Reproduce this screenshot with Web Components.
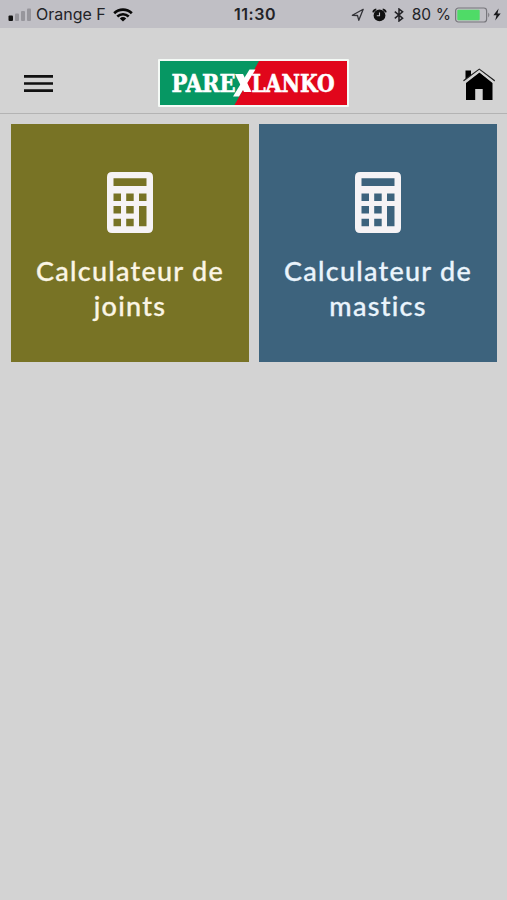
<!DOCTYPE html>
<html lang="fr">
<head>
<meta charset="UTF-8">
<meta name="viewport" content="width=device-width, initial-scale=1.0">
<title>Calculateurs</title>
<style>
    html, body {
        margin: 0;
        height: 100%;
        background: #d3d3d3;
    }

    body {
        overflow: hidden;
        font-family: Inter, "Liberation Sans", sans-serif;
    }

    main {
        display: grid;
        grid-template-columns: 1fr 1fr;
        gap: 10px;
        padding: 10px 10px 0 11px;
    }
</style>
</head>
<body>
    <status-bar carrier="Orange F" time="11:30" battery="80 %"></status-bar>
    <app-header><brand-logo></brand-logo></app-header>
    <main>
        <calc-tile style="--tile: #787325; --ink: #fbf5e4">Calculateur de joints</calc-tile>
        <calc-tile style="--tile: #3d637d; --ink: #eaf4fc">Calculateur de mastics</calc-tile>
    </main>

<script>
class StatusBar extends HTMLElement {
    constructor() {
        super();
        this.attachShadow({ mode: "open" });

        this.shadowRoot.innerHTML = `
            <style>
                :host {
                    display: grid;
                    grid-template-columns: 1fr auto 1fr;
                    align-items: center;
                    height: 28px;
                    padding: 1px 6px 0 8px;
                    box-sizing: border-box;
                    background: #c0bfc5;
                    color: #232327;
                    font-size: 16px;
                    line-height: 27px;
                    white-space: nowrap;
                }

                div {
                    display: flex;
                    align-items: center;
                }

                svg {
                    display: block;
                    flex: none;
                }

                .right {
                    justify-content: flex-end;
                }

                #carrier {
                    margin: 0 7px 0 4px;
                }

                #time {
                    margin-left: 1px;
                    font-weight: 600;
                    letter-spacing: 0.5px;
                }

                #battery {
                    margin: 0 4px 0 8px;
                    font-size: 15.5px;
                    letter-spacing: 0.1px;
                }
            </style>
            <div class="left">
                <svg width="24" height="14" viewBox="0 0 24 14">
                    <rect x="0.5" y="7.5" width="4.5" height="5.5" rx="1" fill="#111"/>
                    <g fill="#97969c">
                        <rect x="7" y="5.5" width="4" height="7.5" rx="1"/>
                        <rect x="13" y="3" width="4" height="10" rx="1"/>
                        <rect x="19" y="0.5" width="4" height="12.5" rx="1"/>
                    </g>
                </svg>
                <span id="carrier"></span>
                <svg width="20" height="14" viewBox="0 0 20 14" fill="none" stroke="#080808" stroke-width="2.7">
                    <path d="M1.2 5.2C6.2 .4 13.8 .4 18.8 5.2"/>
                    <path d="M4.3 8.5C7.6 5.5 12.4 5.5 15.7 8.5"/>
                    <path d="M10 13.5 6.8 10.4Q10 7.8 13.2 10.4Z" fill="#080808" stroke="none"/>
                </svg>
            </div>
            <span id="time"></span>
            <div class="right">
                <svg width="14" height="14" viewBox="0 0 14 14" fill="none" stroke="#333338" stroke-width="1.3" stroke-linejoin="round">
                    <path d="M12.2 1.3 1.3 7.3 6.5 7.5 7.8 12.3Z"/>
                </svg>
                <svg style="margin-left:7px" width="15" height="14" viewBox="0 0 15 14">
                    <circle cx="7.5" cy="7.4" r="5.9" fill="#111"/>
                    <path d="M1.2 4.3Q1.5 1.6 4.3 1.3M10.7 1.3Q13.5 1.6 13.8 4.3" fill="none" stroke="#111" stroke-width="1.8"/>
                    <path d="M7.5 4.4V7.8H4.8" fill="none" stroke="#c0bfc5" stroke-width="1.1"/>
                </svg>
                <svg style="margin-left:7px" width="10" height="14" viewBox="0 0 10 14" fill="none" stroke="#222226" stroke-width="1.5">
                    <path d="M.8 3.6 8.6 10.2 5 13V1L8.6 3.8 .8 10.4"/>
                </svg>
                <span id="battery"></span>
                <svg width="37" height="16" viewBox="0 0 37 16">
                    <rect x="0.6" y="1" width="31" height="14" rx="2.8" fill="none" stroke="#77777c" stroke-width="1.2"/>
                    <rect x="2.3" y="2.8" width="22.4" height="10.4" rx="1" fill="#4fdb67"/>
                    <path d="M33.2 5.6Q35.6 8 33.2 10.4Z" fill="#77777c"/>
                </svg>
                <svg style="margin-left:1px" width="8" height="13" viewBox="0 0 8 13">
                    <path d="M5.6 .4 .4 7.3H3.5L2.2 12.6 7.7 5.4H4.5Z" fill="#19191c"/>
                </svg>
            </div>
        `;
    }

    connectedCallback() {
        for (const name of ["carrier", "time", "battery"]) {
            this.shadowRoot.querySelector("#" + name).textContent = this.getAttribute(name);
        }
    }
}
customElements.define("status-bar", StatusBar);

class BrandLogo extends HTMLElement {
    constructor() {
        super();
        this.attachShadow({ mode: "open" });

        this.shadowRoot.innerHTML = `
            <style>
                :host {
                    display: block;
                }

                svg {
                    display: block;
                    overflow: visible;
                }

                text {
                    font-family: "DejaVu Serif Condensed", "DejaVu Serif", serif;
                    font-stretch: condensed;
                    font-weight: 700;
                    font-size: 24.5px;
                    fill: #fff;
                    stroke: #fff;
                    stroke-width: 0.6px;
                }
            </style>
            <svg width="191" height="48" viewBox="0 0 191 48">
                <rect width="191" height="48" rx="1" fill="#f4faf6"/>
                <rect x="2" y="2" width="187" height="44" fill="#e1061b"/>
                <path d="M2 2H101L76.5 46H2Z" fill="#069763"/>
                <text x="13.5" y="33" textLength="64" lengthAdjust="spacingAndGlyphs">PARE</text>
                <text x="93.5" y="33" textLength="83" lengthAdjust="spacingAndGlyphs">LANKO</text>
                <path d="M77 15H85L93.5 33H86Z" fill="#fff"/>
                <path d="M91.5 10.5H97.5L81 37.5H75Z" fill="#fff"/>
            </svg>
        `;
    }
}
customElements.define("brand-logo", BrandLogo);

class AppHeader extends HTMLElement {
    constructor() {
        super();
        this.attachShadow({ mode: "open" });

        this.shadowRoot.innerHTML = `
            <style>
                :host {
                    display: grid;
                    grid-template-columns: 1fr auto 1fr;
                    height: 86px;
                    padding: 31px 11px 0 24px;
                    box-sizing: border-box;
                    border-bottom: 1px solid #b3b3b3;
                }

                svg {
                    display: block;
                }

                .menu {
                    margin-top: 15px;
                }

                .home {
                    justify-self: end;
                    margin-top: 9px;
                }

                ::slotted(*) {
                    margin-right: 13px;
                }
            </style>
            <svg class="menu" width="29" height="20" viewBox="0 0 29 20">
                <path d="M0 2.4H29M0 9.5H29M0 16.6H29" stroke="#111" stroke-width="2.6"/>
            </svg>
            <slot></slot>
            <svg class="home" width="34" height="34" viewBox="0 0 34 34">
                <path d="M3.5 2.5H9V9L3.5 13.5Z"/>
                <path d="M4 15 17.5 4.5 30.5 15V32H20.7V21H13.2V32H4Z"/>
                <path d="M1.6 13 17.3 1.4 32.6 13" fill="none" stroke="#222" stroke-width="1.6"/>
                <path d="M2.2 14.3 17.3 3 32 14.3" fill="none" stroke="#d3d3d3" stroke-width="1.8"/>
            </svg>
        `;
    }
}
customElements.define("app-header", AppHeader);

class CalcTile extends HTMLElement {
    constructor() {
        super();
        this.attachShadow({ mode: "open" });

        this.shadowRoot.innerHTML = `
            <style>
                :host {
                    display: flex;
                    flex-direction: column;
                    align-items: center;
                    height: 238px;
                    padding: 48px 20px 0;
                    box-sizing: border-box;
                    background: var(--tile);
                    color: var(--ink);
                    text-align: center;
                }

                svg {
                    display: block;
                    flex: none;
                }

                p {
                    margin: 20px 0 0;
                    font: 500 27px/35px Lato, sans-serif;
                    letter-spacing: 1.25px;
                    -webkit-text-stroke: 0.3px var(--ink);
                }
            </style>
            <svg width="47" height="61" viewBox="0 0 47 61">
                <path fill="#f6f3f5" fill-rule="evenodd" d="M5 0H41Q46 0 46 5V56Q46 61 41 61H5Q0 61 0 56V5Q0 0 5 0Z
                    M6.5 6.3V14H39.5V6.3Z
                    M6.5 21.5V29H14V21.5Z M19.2 21.5V29H26.7V21.5Z M32 21.5V29H39.5V21.5Z
                    M6.5 34V41.5H14V34Z M19.2 34V41.5H26.7V34Z M32 34V54.3H39.5V34Z
                    M6.5 46.8V54.3H14V46.8Z M19.2 46.8V54.3H26.7V46.8Z"/>
            </svg>
            <p><slot></slot></p>
        `;
    }
}
customElements.define("calc-tile", CalcTile);
</script>
</body>
</html>
